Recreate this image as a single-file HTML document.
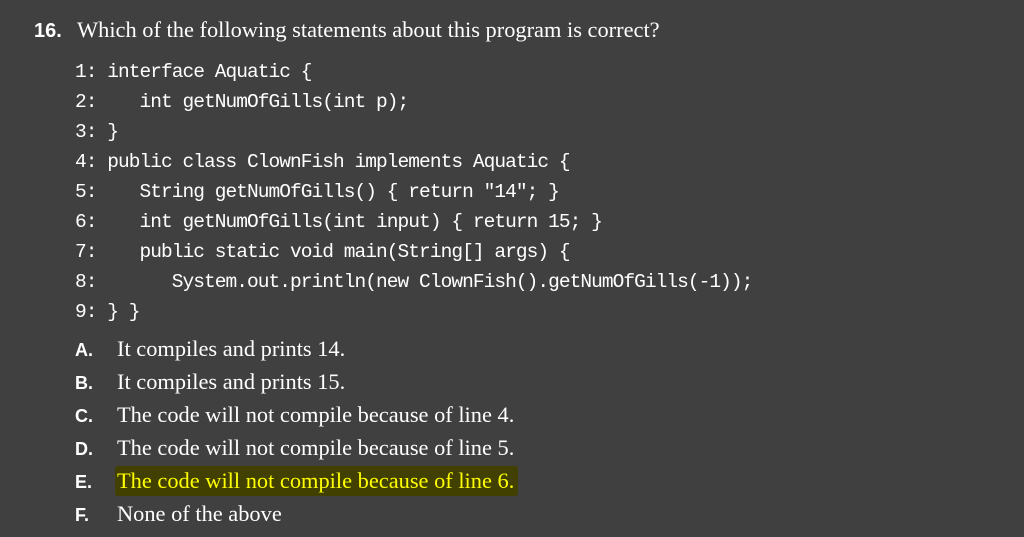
<!DOCTYPE html>
<html><head><style>
body{margin:0;width:1024px;height:537px;background:#404040;overflow:hidden;position:relative;color:#fff}
.t{position:absolute;white-space:pre}
.serif{font-family:"Liberation Serif",serif;font-size:22.4px}
.code{font-family:"Liberation Mono",monospace;font-size:19.5px;letter-spacing:-0.95px;left:75px}
.lab{font-family:"Liberation Sans",sans-serif;font-weight:bold;font-size:18px;left:75px}
</style></head><body>
<div class="t lab" style="left:34px;top:20px;font-size:20px">16.</div>
<div class="t serif" style="left:77px;top:17px">Which of the following statements about this program is correct?</div>
<div class="t code" style="top:61px">1: interface Aquatic {</div>
<div class="t code" style="top:91px">2:    int getNumOfGills(int p);</div>
<div class="t code" style="top:121px">3: }</div>
<div class="t code" style="top:151px">4: public class ClownFish implements Aquatic {</div>
<div class="t code" style="top:181px">5:    String getNumOfGills() { return "14"; }</div>
<div class="t code" style="top:211px">6:    int getNumOfGills(int input) { return 15; }</div>
<div class="t code" style="top:241px">7:    public static void main(String[] args) {</div>
<div class="t code" style="top:271px">8:       System.out.println(new ClownFish().getNumOfGills(-1));</div>
<div class="t code" style="top:301px">9: } }</div>
<div style="position:absolute;left:115px;top:466px;width:403px;height:30px;background:#414000;border-radius:3px"></div>
<div class="t lab" style="top:340px">A.</div><div class="t serif" style="left:117px;top:336px">It compiles and prints 14.</div>
<div class="t lab" style="top:373px">B.</div><div class="t serif" style="left:117px;top:369px">It compiles and prints 15.</div>
<div class="t lab" style="top:406px">C.</div><div class="t serif" style="left:117px;top:402px">The code will not compile because of line 4.</div>
<div class="t lab" style="top:439px">D.</div><div class="t serif" style="left:117px;top:435px">The code will not compile because of line 5.</div>
<div class="t lab" style="top:472px">E.</div><div class="t serif" style="left:117px;top:468px;color:#ffff00">The code will not compile because of line 6.</div>
<div class="t lab" style="top:505px">F.</div><div class="t serif" style="left:117px;top:501px">None of the above</div>
</body></html>
